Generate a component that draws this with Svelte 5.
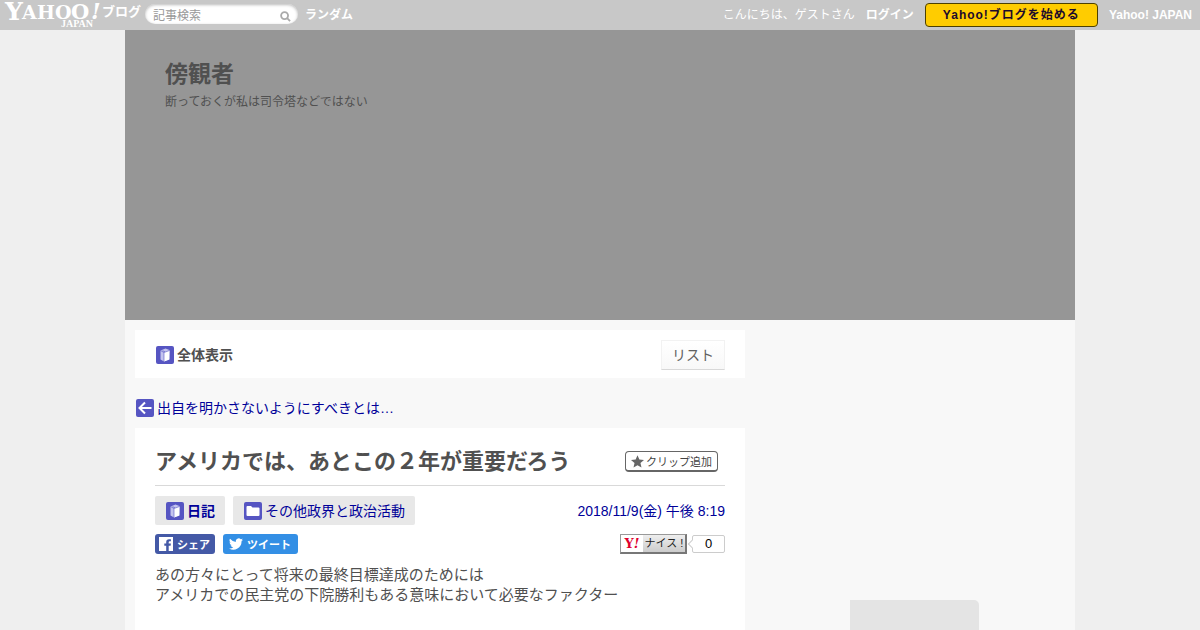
<!-- script -->
<script lang="ts">
  /* constants */
  const blog = { name: '傍観者', description: '断っておくが私は司令塔などではない' }
  const article = {
    title: 'アメリカでは、あとこの２年が重要だろう',
    date: '2018/11/9(金) 午後 8:19',
    lines: [
      'あの方々にとって将来の最終目標達成のためには',
      'アメリカでの民主党の下院勝利もある意味において必要なファクター'
    ]
  }
  /* state */
  let keyword: string = $state('')
  let votes: number = $state(0)
</script>

<!-- template -->
{#snippet bookIcon()}
  <svg class="icon" viewBox="0 0 18 18" aria-hidden="true">
    <rect width="18" height="18" rx="2" fill="#5655c2" />
    <path d="M4.5 4.5 9.5 2.5l4 1.5-.5 9.5L8 15.5l-3.5-2z" fill="#c4c4ee" />
    <path d="M8 6.5 13.5 4.5V13.5L8 15.5z" fill="#fff" />
    <path d="M4.5 4.5 8 6.5 13.5 4.5M8 6.5V15.5M6.5 4.7l2.5 1" fill="none" stroke="#5655c2" stroke-width=".6" />
  </svg>
{/snippet}

<header class="masthead">
  <a class="logo" href="/" aria-label="Yahoo! JAPAN ブログ">
    <svg viewBox="0 0 136 28" aria-hidden="true">
      <g fill="#fff" font-family="'DejaVu Serif', serif" font-weight="700">
        <text x="0" y="19" font-size="25">Y</text>
        <text x="17" y="18" font-size="19">A</text>
        <text x="32" y="18" font-size="19">H</text>
        <text x="50" y="18" font-size="19">O</text>
        <text x="66" y="18" font-size="21">O</text>
        <text x="86" y="18" font-size="22" font-style="italic">!</text>
        <text x="56" y="26" font-size="10" font-family="'Liberation Serif', serif">JAPAN</text>
      </g>
      <text x="97" y="15" fill="#fff" font-size="13" font-weight="700" font-family="'Noto Sans CJK JP', sans-serif">ブログ</text>
    </svg>
  </a>
  <form class="search" role="search" onsubmit={(e) => e.preventDefault()}>
    <input type="text" aria-label="記事検索" placeholder="記事検索" bind:value={keyword} />
    <button type="submit" aria-label="検索">
      <svg viewBox="0 0 12 12" aria-hidden="true">
        <circle cx="5" cy="5" r="3.8" />
        <path d="M7.8 7.8 11 11" />
      </svg>
    </button>
  </form>
  <a class="strong" href="/random">ランダム</a>
  <nav class="user-menu">
    <span>こんにちは、ゲストさん</span>
    <a class="strong" href="/login">ログイン</a>
    <a class="start" href="/start">Yahoo!ブログを始める</a>
    <a class="strong" href="/japan">Yahoo! JAPAN</a>
  </nav>
</header>

<div class="page">
  <div class="cover">
    <h1>{blog.name}</h1>
    <p>{blog.description}</p>
  </div>
  <div class="columns">
    <main>
      <div class="card view-bar">
        <strong class="with-icon">{@render bookIcon()}全体表示</strong>
        <a class="list-link" href="/list">リスト</a>
      </div>
      <a class="previous with-icon" href="/previous">
        <svg class="icon" viewBox="0 0 18 18" aria-hidden="true">
          <rect width="18" height="18" rx="2" fill="#5655c2" />
          <path d="M15.5 9H4M9 3.5 3.5 9 9 14.5" fill="none" stroke="#fff" stroke-width="2" />
        </svg>
        出自を明かさないようにすべきとは…
      </a>
      <article class="card">
        <div class="title-row">
          <h2>{article.title}</h2>
          <button class="clip" type="button">
            <svg viewBox="0 0 14 14" aria-hidden="true">
              <path d="M7 .2 9 4.800l5 .5-3.800 3.300 1.100 4.900L7 11l-4.300 2.500 1.100-4.900L0 5.300l5-.5z" />
            </svg>
            クリップ追加
          </button>
        </div>
        <div class="meta">
          <a class="tag with-icon strong" href="/diary">{@render bookIcon()}日記</a>
          <a class="tag with-icon" href="/category">
            <svg class="icon" viewBox="0 0 18 18" aria-hidden="true">
              <rect width="18" height="18" rx="2" fill="#5655c2" />
              <path d="M2.5 5q0-1 1-1h3.5l1.5 1.5H14.5q1 0 1 1V13q0 1-1 1h-11q-1 0-1-1z" fill="#fff" />
            </svg>
            その他政界と政治活動
          </a>
          <a class="date" href="/date">{article.date}</a>
        </div>
        <div class="actions">
          <button class="share facebook" type="button">
            <svg viewBox="0 0 14 14" aria-hidden="true">
              <rect width="14" height="14" fill="#fff" />
              <path d="M7.2 14V8.7H5.3V6.5h1.9V5q0-2.8 2.9-2.8h1.8v2.1h-1.2q-1 0-1 .9v1.3h2.2l-.3 2.2H9.7V14z" fill="#4459a6" />
            </svg>
            シェア
          </button>
          <button class="share twitter" type="button">
            <svg viewBox="0 0 24 24" aria-hidden="true">
              <path fill="#fff" d="M24 4.6a10 10 0 0 1-2.8.8 5 5 0 0 0 2.1-2.7 10 10 0 0 1-3.1 1.2 4.9 4.9 0 0 0-8.4 4.5A14 14 0 0 1 1.7 3.2a4.9 4.9 0 0 0 1.5 6.5 5 5 0 0 1-2.2-.6 4.9 4.9 0 0 0 3.9 4.9 5 5 0 0 1-2.2.1 4.9 4.9 0 0 0 4.6 3.4A10 10 0 0 1 0 19.5a14 14 0 0 0 21.5-12.4A10 10 0 0 0 24 4.6z" />
            </svg>
            ツイート
          </button>
          <button class="nice" type="button" onclick={() => votes += 1}>
            <span class="y-mark">Y<i>!</i></span>
            <span class="nice-label">ナイス !</span>
          </button>
          <span class="count">{votes}</span>
        </div>
        <div class="body">
          {#each article.lines as line}
          <p>{line}</p>
          {/each}
        </div>
      </article>
    </main>
    <aside>
      <div class="profile"></div>
    </aside>
  </div>
</div>

<!-- style -->
<style>
  :global(body) {
    /* fonts */
    font-family: 'Liberation Sans', 'Noto Sans CJK JP', sans-serif;
    font-size: 14px;
    line-height: 20px;
    /* color */
    color: #505050;
    background-color: #efefef;
  }
  h1, h2, p {
    margin: 0;
  }
  a {
    color: #000099;
    text-decoration: none;
  }
  button, input {
    font-family: inherit;
    cursor: pointer;
  }
  svg {
    display: block;
    flex-shrink: 0;
  }
  .strong {
    font-weight: 700;
  }
  .masthead {
    /* size */
    box-sizing: border-box;
    height: 30px;
    padding: 0 8px 0 5px;
    /* flex */
    display: flex;
    align-items: center;
    /* fonts */
    font-size: 12px;
    white-space: nowrap;
    /* color */
    color: #fff;
    background-color: #c8c8c8;
  }
  .masthead a {
    color: #fff;
  }
  .logo svg {
    width: 136px;
    height: 28px;
    overflow: visible;
  }
  .search {
    /* size */
    box-sizing: border-box;
    width: 153px;
    height: 20px;
    margin: 0 7px 2px 4px;
    padding: 0 7px 0 8px;
    /* flex */
    display: flex;
    align-items: center;
    /* color */
    background-color: #fff;
    border-radius: 10px;
    box-shadow: inset 0 1px 3px #bbb;
  }
  .search input {
    /* size */
    box-sizing: border-box;
    flex: 1;
    min-width: 0;
    height: 20px;
    padding: 4px 0 0;
    /* fonts */
    font-size: 12px;
    /* color */
    background: none;
    border: 0;
    outline: 0;
    cursor: text;
  }
  .search input::placeholder {
    color: #999;
  }
  .search button {
    padding: 4px 0 0;
    background: none;
    border: 0;
  }
  .search svg {
    width: 11px;
    height: 11px;
    fill: none;
    stroke: #aaa;
    stroke-width: 2;
  }
  .user-menu {
    /* flex */
    display: flex;
    align-items: center;
    column-gap: 11px;
    margin-left: auto;
  }
  .masthead .start {
    /* size */
    box-sizing: border-box;
    height: 24px;
    padding: 0 17px;
    /* fonts */
    font-weight: 700;
    line-height: 22px;
    letter-spacing: 1px;
    /* color */
    color: #1c0a2c;
    background-color: #ffcc00;
    border: 1px solid #4d4000;
    border-radius: 4px;
  }
  .page {
    max-width: 950px;
    min-height: calc(100vh - 30px);
    margin: 0 auto;
    background-color: #f8f8f8;
  }
  .cover {
    /* size */
    box-sizing: border-box;
    min-height: 290px;
    padding: 28px 40px;
    /* color */
    background-color: #969696;
  }
  .cover h1 {
    font-size: 23px;
    line-height: 32px;
  }
  .cover p {
    font-size: 12px;
    line-height: 24px;
  }
  .columns {
    display: flex;
    padding: 10px 0 0 10px;
  }
  main {
    flex: 0 1 610px;
  }
  .card {
    padding: 10px 20px;
    background-color: #fff;
  }
  .with-icon {
    display: flex;
    align-items: center;
    column-gap: 3px;
  }
  .icon {
    width: 18px;
    height: 18px;
    margin-left: 1px;
  }
  .view-bar {
    /* size */
    padding: 10px 20px 8px;
    /* flex */
    display: flex;
    align-items: center;
    justify-content: space-between;
  }
  .list-link {
    /* size */
    padding: 4px 10px;
    /* color */
    color: #606060;
    background: linear-gradient(#fff, #f8f8f8);
    border: 1px solid #f2f2f2;
    border-bottom-color: #d8d8d8;
  }
  .previous {
    padding: 20px 0 10px;
  }
  .title-row {
    /* flex */
    display: flex;
    align-items: center;
    justify-content: space-between;
    /* margins */
    padding: 8px 7px 8px 0;
    border-bottom: 1px solid #d9d9d9;
  }
  h2 {
    font-size: 22px;
    line-height: 31px;
  }
  .clip {
    /* size */
    box-sizing: border-box;
    height: 21px;
    padding: 0 5px;
    /* flex */
    display: flex;
    align-items: center;
    column-gap: 2px;
    /* fonts */
    font-size: 11px;
    white-space: nowrap;
    /* color */
    color: #444;
    background-color: #fff;
    border: 1px solid #666;
    border-bottom-width: 2px;
    border-radius: 4px;
  }
  .clip svg {
    width: 13px;
    height: 13px;
    fill: #666;
  }
  .meta {
    display: flex;
    align-items: center;
    column-gap: 8px;
    margin-top: 10px;
  }
  .tag {
    box-sizing: border-box;
    height: 29px;
    padding: 0 10px;
    background-color: #e8e8e8;
    border-radius: 2px;
  }
  .date {
    margin-left: auto;
  }
  .actions {
    display: flex;
    align-items: center;
    margin-top: 9px;
  }
  .share {
    /* size */
    height: 20px;
    padding: 0 5px 0 4px;
    margin-right: 8px;
    /* flex */
    display: flex;
    align-items: center;
    column-gap: 4px;
    /* fonts */
    font-size: 11px;
    font-weight: 700;
    /* color */
    color: #fff;
    border: 0;
    border-radius: 3px;
  }
  .share svg {
    width: 14px;
    height: 14px;
  }
  .facebook {
    background-color: #4459a6;
  }
  .twitter {
    padding: 0 7px 0 6px;
    background-color: #338fe5;
  }
  .nice {
    /* size */
    box-sizing: border-box;
    width: 67px;
    height: 20px;
    margin-left: auto;
    padding: 0;
    /* flex */
    display: flex;
    /* color */
    background-color: #fff;
    border: 1px solid #999;
    border-right: 2px solid #777;
    border-bottom: 2px solid #777;
  }
  .y-mark {
    /* size */
    width: 22px;
    /* fonts */
    font-family: 'DejaVu Serif', serif;
    font-size: 13px;
    font-weight: 700;
    line-height: 18px;
    /* color */
    color: #e0002d;
  }
  .nice-label {
    /* size */
    flex: 1;
    /* fonts */
    font-size: 11px;
    line-height: 17px;
    white-space: nowrap;
    /* color */
    color: #222;
    background: linear-gradient(#eee, #ccc);
  }
  .count {
    /* size */
    box-sizing: border-box;
    min-width: 33px;
    height: 18px;
    margin-left: 5px;
    /* position */
    position: relative;
    /* fonts */
    font-size: 13px;
    line-height: 16px;
    text-align: center;
    /* color */
    color: #000;
    background-color: #fff;
    border: 1px solid #ccc;
    border-radius: 2px;
  }
  .count::before {
    /* size */
    content: '';
    width: 5px;
    height: 5px;
    /* position */
    position: absolute;
    top: 5px;
    left: -4px;
    transform: rotate(45deg);
    /* color */
    background-color: #fff;
    border: solid #ccc;
    border-width: 0 0 1px 1px;
  }
  .body {
    /* margins */
    margin-top: 11px;
    padding-bottom: 40px;
    /* fonts */
    font-size: 15px;
  }
  aside {
    flex: 1;
    padding: 270px 96px 0 105px;
  }
  .profile {
    height: 160px;
    background-color: #e4e4e4;
    border-radius: 0 5px 0 0;
  }
</style>
